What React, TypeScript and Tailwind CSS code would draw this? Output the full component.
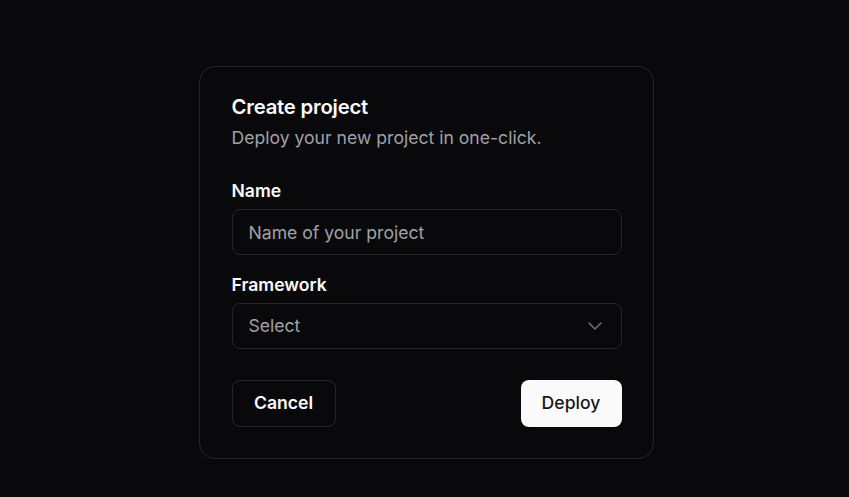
import React from 'react';
import { ChevronDown } from 'lucide-react';

const App: React.FC = () => {
  return (
    <div
      className="min-h-screen w-full bg-[#09090b] flex justify-center pt-[66px] pl-[3px]"
      style={{ fontFamily: 'Inter, "Noto Sans", sans-serif' }}
    >
      <div className="w-[455px] h-[393px] rounded-2xl border border-[#27272a] bg-[#09090b] pl-[31px] pr-[31px] pt-[26px]">
        <div className="pl-px">
          <h2 className="text-[20.3px] leading-7 font-semibold text-[#fafafa] tracking-[-0.01em]">Create project</h2>
          <p className="mt-[5px] text-[17.6px] leading-6 text-[#a1a1aa]">Deploy your new project in one-click.</p>

          <div className="mt-[29px] flex flex-col gap-[6px]">
            <label className="text-[17.6px] leading-6 font-semibold text-[#fafafa]">Name</label>
            <input
              type="text"
              placeholder="Name of your project"
              className="h-[46px] w-full rounded-lg border border-[#27272a] bg-transparent px-4 text-[17.6px] text-[#fafafa] placeholder:text-[#a1a1aa] outline-none"
            />
          </div>

          <div className="mt-[18px] flex flex-col gap-[6px]">
            <label className="text-[17.6px] leading-6 font-semibold text-[#fafafa]">Framework</label>
            <button
              type="button"
              className="h-[46px] w-full rounded-lg border border-[#27272a] bg-transparent pl-4 pr-[14px] flex items-center justify-between text-[17.6px] text-[#a1a1aa]"
            >
              <span>Select</span>
              <ChevronDown className="h-6 w-6 text-[#71717a]" strokeWidth={1.5} />
            </button>
          </div>

          <div className="mt-[31px] flex items-center justify-between">
            <button
              type="button"
              className="h-[47px] w-[104px] rounded-lg border border-[#27272a] text-[17.6px] font-semibold text-[#fafafa]"
            >
              Cancel
            </button>
            <button
              type="button"
              className="h-[47px] w-[101px] rounded-lg bg-[#fafafa] text-[17.6px] font-medium text-[#18181b]"
            >
              Deploy
            </button>
          </div>
        </div>
      </div>
    </div>
  );
};

export default App;
